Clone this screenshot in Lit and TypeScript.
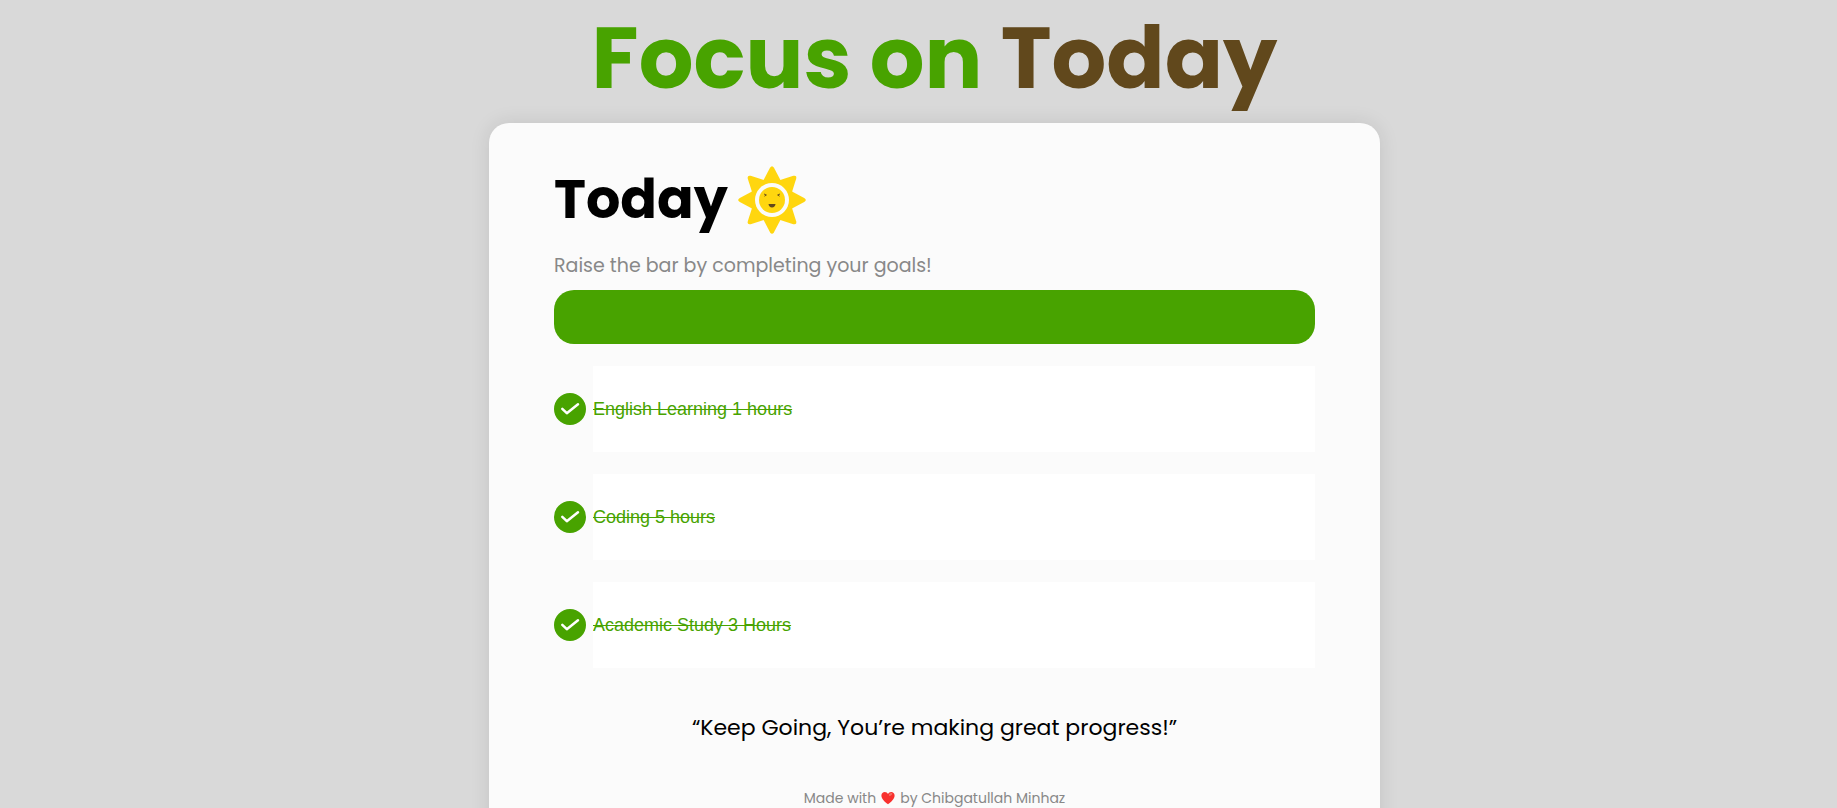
import { LitElement, html, svg, css } from "lit";
import { customElement, property, state } from "lit/decorators.js";

interface Task {
  name: string;
  done: boolean;
}

@customElement("task-row")
export class TaskRow extends LitElement {
  @property() name = "";
  @property({ type: Boolean }) done = false;

  static styles = css`
    :host {
      display: flex;
      align-items: center;
      gap: 7px;
    }
    .check {
      display: grid;
      flex: none;
      cursor: pointer;
    }
    .box,
    .tick {
      grid-area: 1 / 1;
      width: 32px;
      height: 32px;
      margin: 0;
    }
    .box {
      appearance: none;
      box-sizing: border-box;
      border: 2px solid #cfcfcf;
      border-radius: 50%;
      background: #fff;
    }
    .box:checked {
      border-color: #48a300;
      background: #48a300;
    }
    .tick {
      pointer-events: none;
      visibility: hidden;
    }
    .box:checked + .tick {
      visibility: visible;
    }
    .text {
      flex: 1;
      min-width: 0;
      box-sizing: border-box;
      height: 86px;
      padding: 0;
      border: 0;
      outline: none;
      background: #fff;
      color: #111;
      font: 18px "Liberation Sans", Arial, sans-serif;
    }
    .done {
      color: #48a300;
      text-decoration: line-through;
    }
  `;

  private toggle() {
    this.dispatchEvent(new CustomEvent("toggle-task"));
  }

  render() {
    return html`
      <label class="check">
        <input class="box" type="checkbox" aria-label=${"Complete " + this.name}
          .checked=${this.done} @change=${this.toggle} />
        <svg class="tick" viewBox="0 0 32 32" aria-hidden="true">
          <path d="M8.3 15.8 L12.8 20.2 L24 11.2" fill="none" stroke="#fff" stroke-width="2.5"
            stroke-linecap="round" stroke-linejoin="round" />
        </svg>
      </label>
      <input class="text ${this.done ? "done" : ""}" type="text" aria-label="Goal" .value=${this.name} />
    `;
  }
}

@customElement("app-root")
export class AppRoot extends LitElement {
  @state() private tasks: Task[] = [
    { name: "English Learning 1 hours", done: true },
    { name: "Coding 5 hours", done: true },
    { name: "Academic Study 3 Hours", done: true },
  ];

  static styles = css`
    :host {
      display: block;
      box-sizing: border-box;
      min-height: 100vh;
      padding-left: 32px;
      background: #d9d9d9;
      font-family: Poppins, Inter, sans-serif;
    }
    .page {
      display: flex;
      flex-direction: column;
      align-items: center;
      gap: 7px;
    }
    .title {
      margin: 0;
      color: #48a300;
      font-size: 86px;
      font-weight: 700;
      line-height: 116px;
      text-align: center;
    }
    .accent {
      color: #61481c;
    }
    .card {
      box-sizing: border-box;
      width: 100%;
      max-width: 891px;
      padding: 39px 65px;
      border-radius: 20px;
      background: #fbfbfb;
      box-shadow: 0 0 20px rgba(0, 0, 0, 0.1);
    }
    .heading {
      display: flex;
      align-items: flex-start;
      gap: 6px;
      margin: 0;
      color: #000;
      font-size: 54px;
      font-weight: 700;
      line-height: 74px;
    }
    .sun {
      width: 76px;
      height: 76px;
    }
    .hint {
      margin: 14px 0 10px;
      color: #888;
      font-size: 19px;
      line-height: 28px;
    }
    .track {
      height: 54px;
      overflow: hidden;
      border-radius: 20px;
      background: #e5e5e5;
    }
    .bar {
      height: 100%;
      background: #48a300;
    }
    .list {
      display: grid;
      gap: 22px;
      margin: 22px 0 42px;
    }
    .quote {
      margin: 0;
      color: #000;
      font-size: 22px;
      line-height: 36px;
      text-align: center;
    }
    .footer {
      display: flex;
      justify-content: center;
      align-items: center;
      gap: 5px;
      margin-top: 42px;
      color: #888;
      font-size: 14px;
      line-height: 20px;
    }
    .heart {
      width: 14px;
      height: 14px;
    }
  `;

  private toggle(index: number) {
    this.tasks = this.tasks.map((t, i) => (i === index ? { ...t, done: !t.done } : t));
  }

  render() {
    const percent = (100 * this.tasks.filter((t) => t.done).length) / this.tasks.length;
    const rays = [0, 45, 90, 135, 180, 225, 270, 315];
    return html`
      <main class="page">
        <h1 class="title">Focus on <span class="accent">Today</span></h1>
        <section class="card">
          <h2 class="heading">
            Today
            <svg class="sun" viewBox="-38 -38 76 76" aria-hidden="true">
              ${rays.map(
                (a) => svg`<path transform="rotate(${a})" fill="#ffd60f"
                  d="M-11 -14 L-8.4 -20 L-2 -32.2 Q0 -35.4 2 -32.2 L8.4 -20 L11 -14 Z" />`
              )}
              <circle r="21" fill="#ffd60f" />
              <circle r="17" fill="#fbfbfb" />
              <circle r="13" fill="#ffd60f" />
              <path d="M-3.5 4 H3.5 Q3 7.4 0 7.4 Q-3 7.4 -3.5 4 Z" fill="#61481c" />
              <path d="M-8 -6 L-5.6 -5 L-7.6 -3.8 M8 -6 L5.6 -5 L7.6 -3.8" fill="none" stroke="#61481c"
                stroke-width="0.9" />
            </svg>
          </h2>
          <p class="hint">Raise the bar by completing your goals!</p>
          <div class="track" role="progressbar" aria-label="Goals completed" aria-valuenow=${Math.round(percent)}>
            <div class="bar" style="width: ${percent}%"></div>
          </div>
          <div class="list">
            ${this.tasks.map(
              (t, i) => html`<task-row .name=${t.name} .done=${t.done} @toggle-task=${() => this.toggle(i)}></task-row>`
            )}
          </div>
          <p class="quote">“Keep Going, You’re making great progress!”</p>
          <footer class="footer">
            <span>Made with</span>
            <svg class="heart" viewBox="0 0 14 14" role="img" aria-label="love">
              <path fill="#f8312f"
                d="M7 13.2 C3.4 10.8 0.4 7.8 0.4 4.6 C0.4 2.4 2 1 3.8 1 C5.2 1 6.4 1.8 7 3 C7.6 1.8 8.8 1 10.2 1 C12 1 13.6 2.4 13.6 4.6 C13.6 7.8 10.6 10.8 7 13.2 Z" />
              <ellipse cx="9.6" cy="3.4" rx="1.9" ry="1.1" transform="rotate(-35 9.6 3.4)" fill="#f37366" />
            </svg>
            <span>by Chibgatullah Minhaz</span>
          </footer>
        </section>
      </main>
    `;
  }
}
